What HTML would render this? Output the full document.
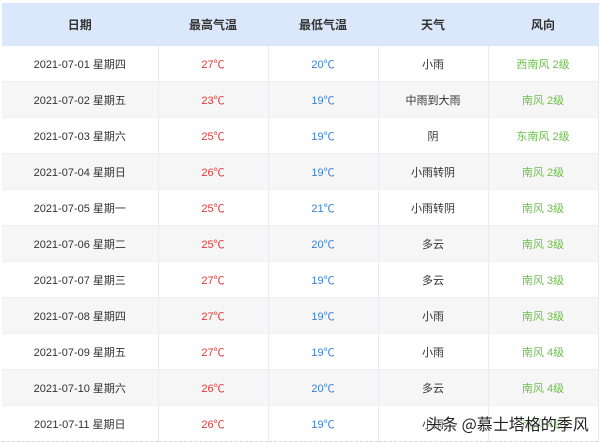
<!DOCTYPE html>
<html><head><meta charset="utf-8"><style>
body{margin:0;background:#fff;width:600px;height:443px;overflow:hidden;font-family:"Liberation Sans","Noto Sans CJK SC",sans-serif;}
table{position:absolute;left:2px;top:3px;border-collapse:collapse;table-layout:fixed;width:596px;}
td,th{height:35px;padding:0;text-align:center;font-size:11px;color:#333;border-right:1px solid #e8ecf2;border-bottom:1px solid #eef0f3;}
th{height:42px;background:#dbe8fb;font-weight:bold;font-size:12px;color:#333;border-color:#dbe8fb;}
tr:nth-child(odd) td{background:#f6f6f6;}
tr:last-child td{border-bottom:1px dashed #cfd8e6;}
.r{color:#e03a3a}.b{color:#3d82d8}.g{color:#6cc04a}
.wm{position:absolute;left:426px;top:411px;font-size:16px;color:#222;text-shadow:0 0 2px #fff,0 0 2px #fff;font-family:"Noto Sans CJK SC",sans-serif;}
</style></head><body>
<table>
<colgroup><col style="width:156px"><col style="width:110px"><col style="width:110px"><col style="width:110px"><col style="width:110px"></colgroup>
<tr><th>日期</th><th>最高气温</th><th>最低气温</th><th>天气</th><th>风向</th></tr>
<tr><td>2021-07-01 星期四</td><td class="r">27℃</td><td class="b">20℃</td><td>小雨</td><td class="g">西南风 2级</td></tr>
<tr><td>2021-07-02 星期五</td><td class="r">23℃</td><td class="b">19℃</td><td>中雨到大雨</td><td class="g">南风 2级</td></tr>
<tr><td>2021-07-03 星期六</td><td class="r">25℃</td><td class="b">19℃</td><td>阴</td><td class="g">东南风 2级</td></tr>
<tr><td>2021-07-04 星期日</td><td class="r">26℃</td><td class="b">19℃</td><td>小雨转阴</td><td class="g">南风 2级</td></tr>
<tr><td>2021-07-05 星期一</td><td class="r">25℃</td><td class="b">21℃</td><td>小雨转阴</td><td class="g">南风 3级</td></tr>
<tr><td>2021-07-06 星期二</td><td class="r">25℃</td><td class="b">20℃</td><td>多云</td><td class="g">南风 3级</td></tr>
<tr><td>2021-07-07 星期三</td><td class="r">27℃</td><td class="b">19℃</td><td>多云</td><td class="g">南风 3级</td></tr>
<tr><td>2021-07-08 星期四</td><td class="r">27℃</td><td class="b">19℃</td><td>小雨</td><td class="g">南风 3级</td></tr>
<tr><td>2021-07-09 星期五</td><td class="r">27℃</td><td class="b">19℃</td><td>小雨</td><td class="g">南风 4级</td></tr>
<tr><td>2021-07-10 星期六</td><td class="r">26℃</td><td class="b">20℃</td><td>多云</td><td class="g">南风 4级</td></tr>
<tr><td>2021-07-11 星期日</td><td class="r">26℃</td><td class="b">19℃</td><td>小雨</td><td class="g">南风 4级</td></tr>
</table>
<div class="wm">头条 @慕士塔格的季风</div>
</body></html>
